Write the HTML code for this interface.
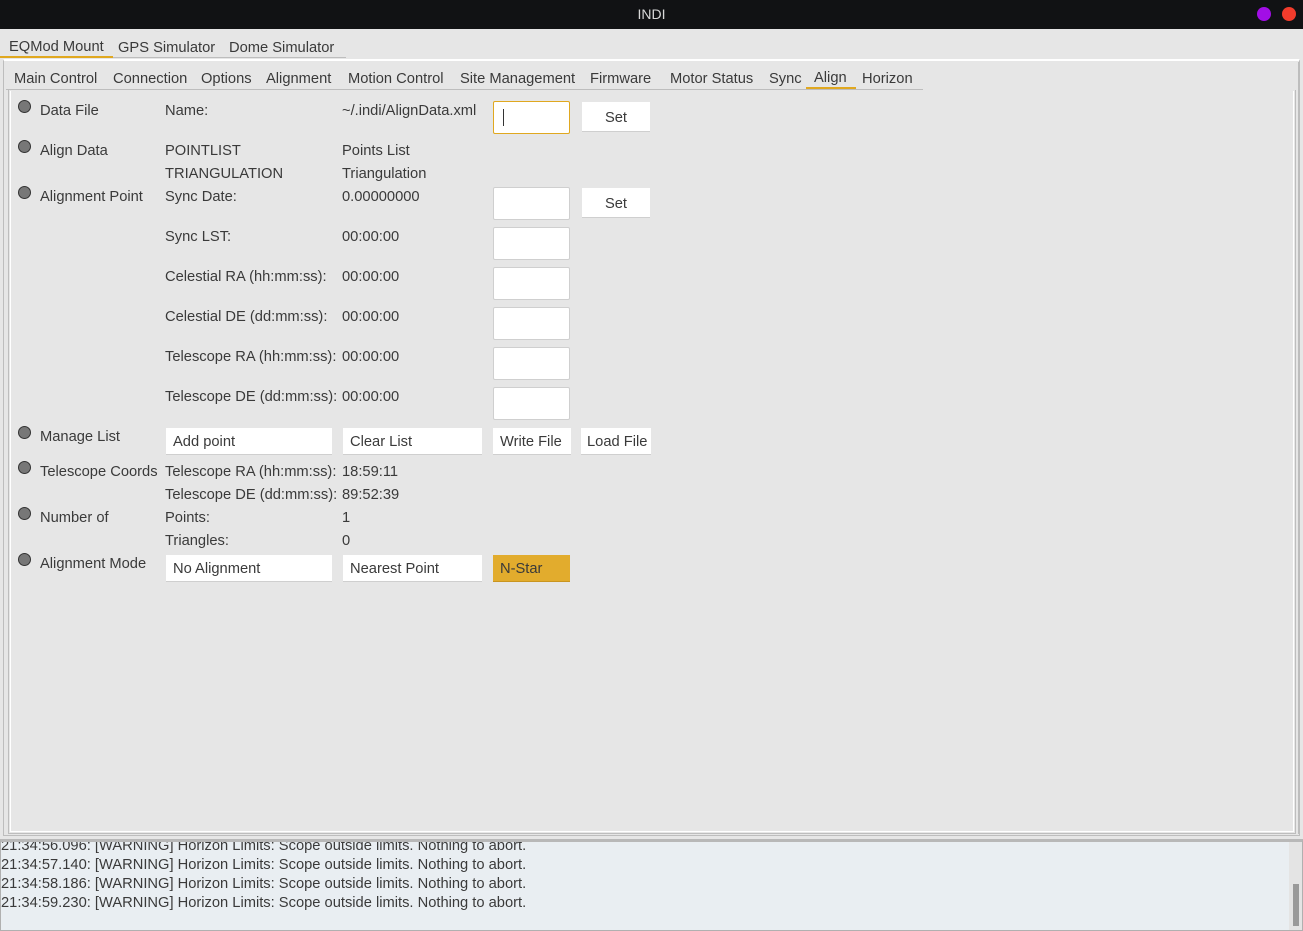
<!DOCTYPE html>
<html><head><meta charset="utf-8"><style>
*{margin:0;padding:0;box-sizing:border-box}
body{width:1303px;height:931px;background:#e6e6e6;position:relative;overflow:hidden;font-family:"Liberation Sans",sans-serif;font-size:14.7px;color:#3a3a3a}
.a{position:absolute;white-space:nowrap;line-height:16px;margin-top:1px}
.title{position:absolute;left:0;top:0;width:1303px;height:29px;background:#111214;color:#d8d8d8;text-align:center;line-height:29px;font-size:14px}
.dot{position:absolute;width:14px;height:14px;border-radius:7px;top:7px}
.b{position:absolute;width:13px;height:13px;border-radius:7px;background:#777;border:1px solid #333}
.in{position:absolute;background:#fff;border:1px solid #cfcfcf;border-radius:2px;width:77px;height:33px}
.btn{position:absolute;background:#fff;border-bottom:1px solid #cfcfcf;height:27px;line-height:29px;padding-left:7px;white-space:nowrap}
</style></head><body>
<div class="title">INDI</div>
<div class="dot" style="left:1257px;background:#a20ee6"></div>
<div class="dot" style="left:1282px;background:#f23c2c"></div>

<div class="a" style="left:9px;top:38px">EQMod Mount</div>
<div class="a" style="left:118px;top:39px">GPS Simulator</div>
<div class="a" style="left:229px;top:39px">Dome Simulator</div>
<div style="position:absolute;left:0;top:56px;width:113px;height:2px;background:#e0a820"></div>
<div style="position:absolute;left:113px;top:57px;width:233px;height:1px;background:#bdbdbd"></div>

<div style="position:absolute;left:3px;top:59px;width:1297px;height:777px;border:1px solid #bdbdbd;border-top:2px solid #fff"></div>
<div style="position:absolute;left:5px;top:62px;width:1294px;height:772px;border-right:1px solid #bdbdbd"></div>

<div class="a" style="left:14px;top:70px">Main Control</div>
<div class="a" style="left:113px;top:70px">Connection</div>
<div class="a" style="left:201px;top:70px">Options</div>
<div class="a" style="left:266px;top:70px">Alignment</div>
<div class="a" style="left:348px;top:70px">Motion Control</div>
<div class="a" style="left:460px;top:70px">Site Management</div>
<div class="a" style="left:590px;top:70px">Firmware</div>
<div class="a" style="left:670px;top:70px">Motor Status</div>
<div class="a" style="left:769px;top:70px">Sync</div>
<div class="a" style="left:814px;top:69px">Align</div>
<div class="a" style="left:862px;top:70px">Horizon</div>
<div style="position:absolute;left:6px;top:89px;width:917px;height:1px;background:#bdbdbd"></div>
<div style="position:absolute;left:806px;top:87px;width:50px;height:2px;background:#e0a820"></div>

<div style="position:absolute;left:8px;top:90px;width:1288px;height:744px;border:1px solid #bdbdbd;border-top:none"></div>
<div style="position:absolute;left:10px;top:91px;width:1284px;height:741px;border:1px solid #fff;border-top:none"></div>

<div class="b" style="left:18px;top:100px"></div><div class="a" style="left:40px;top:102px">Data File</div>
<div class="a" style="left:165px;top:102px">Name:</div>
<div class="a" style="left:342px;top:102px">~/.indi/AlignData.xml</div>
<div class="in" style="left:493px;top:101px;border-color:#e0a820"><div style="position:absolute;left:9px;top:7px;width:1px;height:17px;background:#333"></div></div>
<div class="btn" style="left:582px;top:102px;width:68px;height:30px;line-height:32px;text-align:center;padding:0">Set</div>

<div class="b" style="left:18px;top:140px"></div><div class="a" style="left:40px;top:142px">Align Data</div>
<div class="a" style="left:165px;top:142px">POINTLIST</div><div class="a" style="left:342px;top:142px">Points List</div>
<div class="a" style="left:165px;top:165px">TRIANGULATION</div><div class="a" style="left:342px;top:165px">Triangulation</div>

<div class="b" style="left:18px;top:186px"></div><div class="a" style="left:40px;top:188px">Alignment Point</div>
<div class="a" style="left:165px;top:188px">Sync Date:</div><div class="a" style="left:342px;top:188px">0.00000000</div>
<div class="in" style="left:493px;top:187px"></div>
<div class="btn" style="left:582px;top:188px;width:68px;height:30px;line-height:32px;text-align:center;padding:0">Set</div>
<div class="a" style="left:165px;top:228px">Sync LST:</div><div class="a" style="left:342px;top:228px">00:00:00</div><div class="in" style="left:493px;top:227px"></div>
<div class="a" style="left:165px;top:268px">Celestial RA (hh:mm:ss):</div><div class="a" style="left:342px;top:268px">00:00:00</div><div class="in" style="left:493px;top:267px"></div>
<div class="a" style="left:165px;top:308px">Celestial DE (dd:mm:ss):</div><div class="a" style="left:342px;top:308px">00:00:00</div><div class="in" style="left:493px;top:307px"></div>
<div class="a" style="left:165px;top:348px">Telescope RA (hh:mm:ss):</div><div class="a" style="left:342px;top:348px">00:00:00</div><div class="in" style="left:493px;top:347px"></div>
<div class="a" style="left:165px;top:388px">Telescope DE (dd:mm:ss):</div><div class="a" style="left:342px;top:388px">00:00:00</div><div class="in" style="left:493px;top:387px"></div>

<div class="b" style="left:18px;top:426px"></div><div class="a" style="left:40px;top:428px">Manage List</div>
<div class="btn" style="left:166px;top:428px;width:166px">Add point</div>
<div class="btn" style="left:343px;top:428px;width:139px">Clear List</div>
<div class="btn" style="left:493px;top:428px;width:78px">Write File</div>
<div class="btn" style="left:581px;top:428px;width:70px;padding-left:6px">Load File</div>

<div class="b" style="left:18px;top:461px"></div><div class="a" style="left:40px;top:463px">Telescope Coords</div>
<div class="a" style="left:165px;top:463px">Telescope RA (hh:mm:ss):</div><div class="a" style="left:342px;top:463px">18:59:11</div>
<div class="a" style="left:165px;top:486px">Telescope DE (dd:mm:ss):</div><div class="a" style="left:342px;top:486px">89:52:39</div>

<div class="b" style="left:18px;top:507px"></div><div class="a" style="left:40px;top:509px">Number of</div>
<div class="a" style="left:165px;top:509px">Points:</div><div class="a" style="left:342px;top:509px">1</div>
<div class="a" style="left:165px;top:532px">Triangles:</div><div class="a" style="left:342px;top:532px">0</div>

<div class="b" style="left:18px;top:553px"></div><div class="a" style="left:40px;top:555px">Alignment Mode</div>
<div class="btn" style="left:166px;top:555px;width:166px">No Alignment</div>
<div class="btn" style="left:343px;top:555px;width:139px">Nearest Point</div>
<div class="btn" style="left:493px;top:555px;width:77px;background:#e2ac2d;border-color:#c99520">N-Star</div>

<div style="position:absolute;left:0;top:839px;width:1303px;height:92px;background:#e9eef2;border:1px solid #b0b0b0;border-top:3px solid #b8b8b8;overflow:hidden">
<div class="a" style="left:0;top:-6px;line-height:19px;color:#3a3a3a">21:34:56.096: [WARNING] Horizon Limits: Scope outside limits. Nothing to abort.<br>21:34:57.140: [WARNING] Horizon Limits: Scope outside limits. Nothing to abort.<br>21:34:58.186: [WARNING] Horizon Limits: Scope outside limits. Nothing to abort.<br>21:34:59.230: [WARNING] Horizon Limits: Scope outside limits. Nothing to abort.</div>
<div style="position:absolute;right:0;top:0;width:13px;height:90px;background:#e4e4e4"></div>
<div style="position:absolute;right:3px;top:42px;width:6px;height:42px;background:#9a9a9a"></div>
</div>
</body></html>
